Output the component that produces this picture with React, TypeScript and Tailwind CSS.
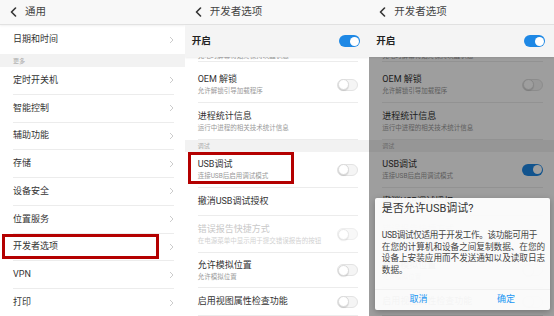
import React from 'react'

function BackArrow() {
  return (
    <svg width="7" height="10" viewBox="0 0 7 10" className="shrink-0">
      <polyline points="5.5,1 1.5,5 5.5,9" fill="none" stroke="#333" strokeWidth="1.6" strokeLinecap="round" strokeLinejoin="round" />
    </svg>
  )
}

function Chevron() {
  return (
    <svg width="5" height="8" viewBox="0 0 5 8" className="shrink-0">
      <polyline points="1,1 4,4 1,7" fill="none" stroke="#c6c6c6" strokeWidth="0.9" />
    </svg>
  )
}

function Toggle({ on = false, faded = false }: { on?: boolean; faded?: boolean }) {
  if (on) {
    return (
      <div className="flex h-[12px] w-[21px] shrink-0 items-center justify-end rounded-full bg-[#1e88e5] pr-[1.5px]">
        <div className="h-[9px] w-[9px] rounded-full bg-white" />
      </div>
    )
  }
  return (
    <div className={`flex h-[12px] w-[21px] shrink-0 items-center rounded-full border border-[#e3e3e3] bg-[#f5f5f5] ${faded ? 'opacity-60' : ''}`}>
      <div className="h-[11px] w-[11px] rounded-full border border-[#dadada] bg-white shadow-[0_1px_1px_rgba(0,0,0,0.12)]" />
    </div>
  )
}

function Header({ title }: { title: string }) {
  return (
    <div className="relative z-10 flex h-[25px] shrink-0 items-center gap-[8px] border-b border-[#e2e2e2] bg-[#f8f8f8] pl-[10px] shadow-[0_1px_2px_rgba(0,0,0,0.06)]">
      <BackArrow />
      <span className="text-[10.5px] leading-none text-[#444]">{title}</span>
    </div>
  )
}

function Section({ label, h }: { label: string; h: string }) {
  return (
    <div className={`flex ${h} shrink-0 items-center bg-[#f2f2f2] pl-[13px] text-[6px] leading-none text-[#aaa]`}>
      {label}
    </div>
  )
}

function NavRow({ label, h = 'h-[27.75px]', line = true, children }: { label: string; h?: string; line?: boolean; children?: React.ReactNode }) {
  return (
    <div className={`relative ${h} shrink-0 pl-[13px] pr-[11px]`}>
      <div className={`flex h-full items-center justify-between ${line ? 'border-b border-[#ececec]' : ''}`}>
        <span className="text-[9px] leading-none text-[#333]">{label}</span>
        <Chevron />
      </div>
      {children}
    </div>
  )
}

function GeneralPanel() {
  return (
    <div className="flex h-[316px] flex-col overflow-hidden bg-white">
      <Header title="通用" />
      <NavRow label="日期和时间" h="h-[29px]" line={false} />
      <Section label="更多" h="h-[13px]" />
      <NavRow label="定时开关机" />
      <NavRow label="智能控制" />
      <NavRow label="辅助功能" />
      <NavRow label="存储" />
      <NavRow label="设备安全" />
      <NavRow label="位置服务" />
      <NavRow label="开发者选项">
        <div className="absolute left-[2px] top-[0.5px] h-[25px] w-[157px] border-[3px] border-[#b40000]" />
      </NavRow>
      <NavRow label="VPN" />
      <NavRow label="打印" line={false} />
    </div>
  )
}

type RowProps = {
  title: string
  sub?: string
  h: string
  toggle?: 'on' | 'off' | 'faded' | 'none'
  disabled?: boolean
  children?: React.ReactNode
}

function DevRow({ title, sub, h, toggle = 'none', disabled = false, children }: RowProps) {
  return (
    <div className={`relative ${h} shrink-0 pl-[13px] pr-[11px]`}>
      <div className="flex h-full items-center justify-between border-b border-[#ececec]">
        <div className="flex flex-col gap-[2px]">
          <span className={`text-[9px] leading-[11px] ${disabled ? 'text-[#c9c9c9]' : 'text-[#333]'}`}>{title}</span>
          {sub && (
            <span className={`text-[6.5px] leading-[8px] ${disabled ? 'text-[#d2d2d2]' : 'text-[#999]'}`}>{sub}</span>
          )}
        </div>
        {toggle === 'on' && <Toggle on />}
        {toggle === 'off' && <Toggle />}
        {toggle === 'faded' && <Toggle faded />}
      </div>
      {children}
    </div>
  )
}

function DevPanel({ usbOn = false, marked = false }: { usbOn?: boolean; marked?: boolean }) {
  return (
    <div className="flex h-[316px] flex-col overflow-hidden bg-white">
      <Header title="开发者选项" />
      <div className="relative z-10 flex h-[32px] shrink-0 items-center justify-between bg-[#f4f4f4] pl-[7px] pr-[9px] shadow-[0_1px_2px_rgba(0,0,0,0.08)]">
        <span className="text-[9.5px] font-bold leading-none text-[#222]">开启</span>
        <Toggle on />
      </div>
      <div className="h-[10px] shrink-0 overflow-hidden pl-[13px] pr-[11px]">
        <div className="h-full border-b border-[#ececec]">
          <div className="-mt-[5px] text-[6.5px] leading-[8px] text-[#999]">充电时屏幕将始终保持唤醒状态</div>
        </div>
      </div>
      <DevRow title="OEM 解锁" sub="允许解锁引导加载程序" h="h-[36px]" toggle="off" />
      <DevRow title="进程统计信息" sub="运行中进程的相关技术统计信息" h="h-[37px]" />
      <Section label="调试" h="h-[12px]" />
      <DevRow title="USB调试" sub="连接USB后启用调试模式" h="h-[36px]" toggle={usbOn ? 'on' : 'off'}>
        {marked && <div className="absolute left-[3px] top-0 h-[32px] w-[106px] border-[3px] border-[#b40000]" />}
      </DevRow>
      <DevRow title="撤消USB调试授权" h="h-[28px]" />
      <DevRow title="错误报告快捷方式" sub="在电源菜单中显示用于提交错误报告的按钮" h="h-[37px]" toggle="faded" disabled />
      <DevRow title="允许模拟位置" sub="允许模拟位置" h="h-[35px]" toggle="off" />
      <DevRow title="启用视图属性检查功能" h="h-[28px]" toggle="off" />
    </div>
  )
}

function UsbDialog() {
  return (
    <div className="absolute left-[5.5px] top-[198px] flex h-[112px] w-[175px] flex-col rounded-[2px] bg-white/95 shadow-[0_2px_6px_rgba(0,0,0,0.25)]">
      <div className="px-[7px] pt-[4px] text-[11px] leading-[14px] text-[#333]">是否允许USB调试?</div>
      <div className="mt-[14px] whitespace-nowrap px-[7px] text-[8.6px] leading-[11.5px] text-[#444]">
        <div className="tracking-[-0.35px]">USB调试仅适用于开发工作。该功能可用于</div>
        <div>在您的计算机和设备之间复制数据、在您的</div>
        <div>设备上安装应用而不发送通知以及读取日志</div>
        <div>数据。</div>
      </div>
      <div className="mt-auto grid h-[21px] grid-cols-2 border-t border-[#f0f0f0] text-[9px] text-[#2196f3]">
        <div className="flex items-center justify-center">取消</div>
        <div className="flex items-center justify-center">确定</div>
      </div>
    </div>
  )
}

export default function App() {
  return (
    <div className="grid h-[316px] w-[554px] grid-cols-3 overflow-hidden bg-white font-[family-name:Roboto,'Noto_Sans_CJK_SC',sans-serif]">
      <GeneralPanel />
      <DevPanel marked />
      <div className="relative h-[316px] overflow-hidden">
        <DevPanel usbOn />
        <div className="absolute inset-0 bg-black/[0.38]" />
        <UsbDialog />
      </div>
    </div>
  )
}
